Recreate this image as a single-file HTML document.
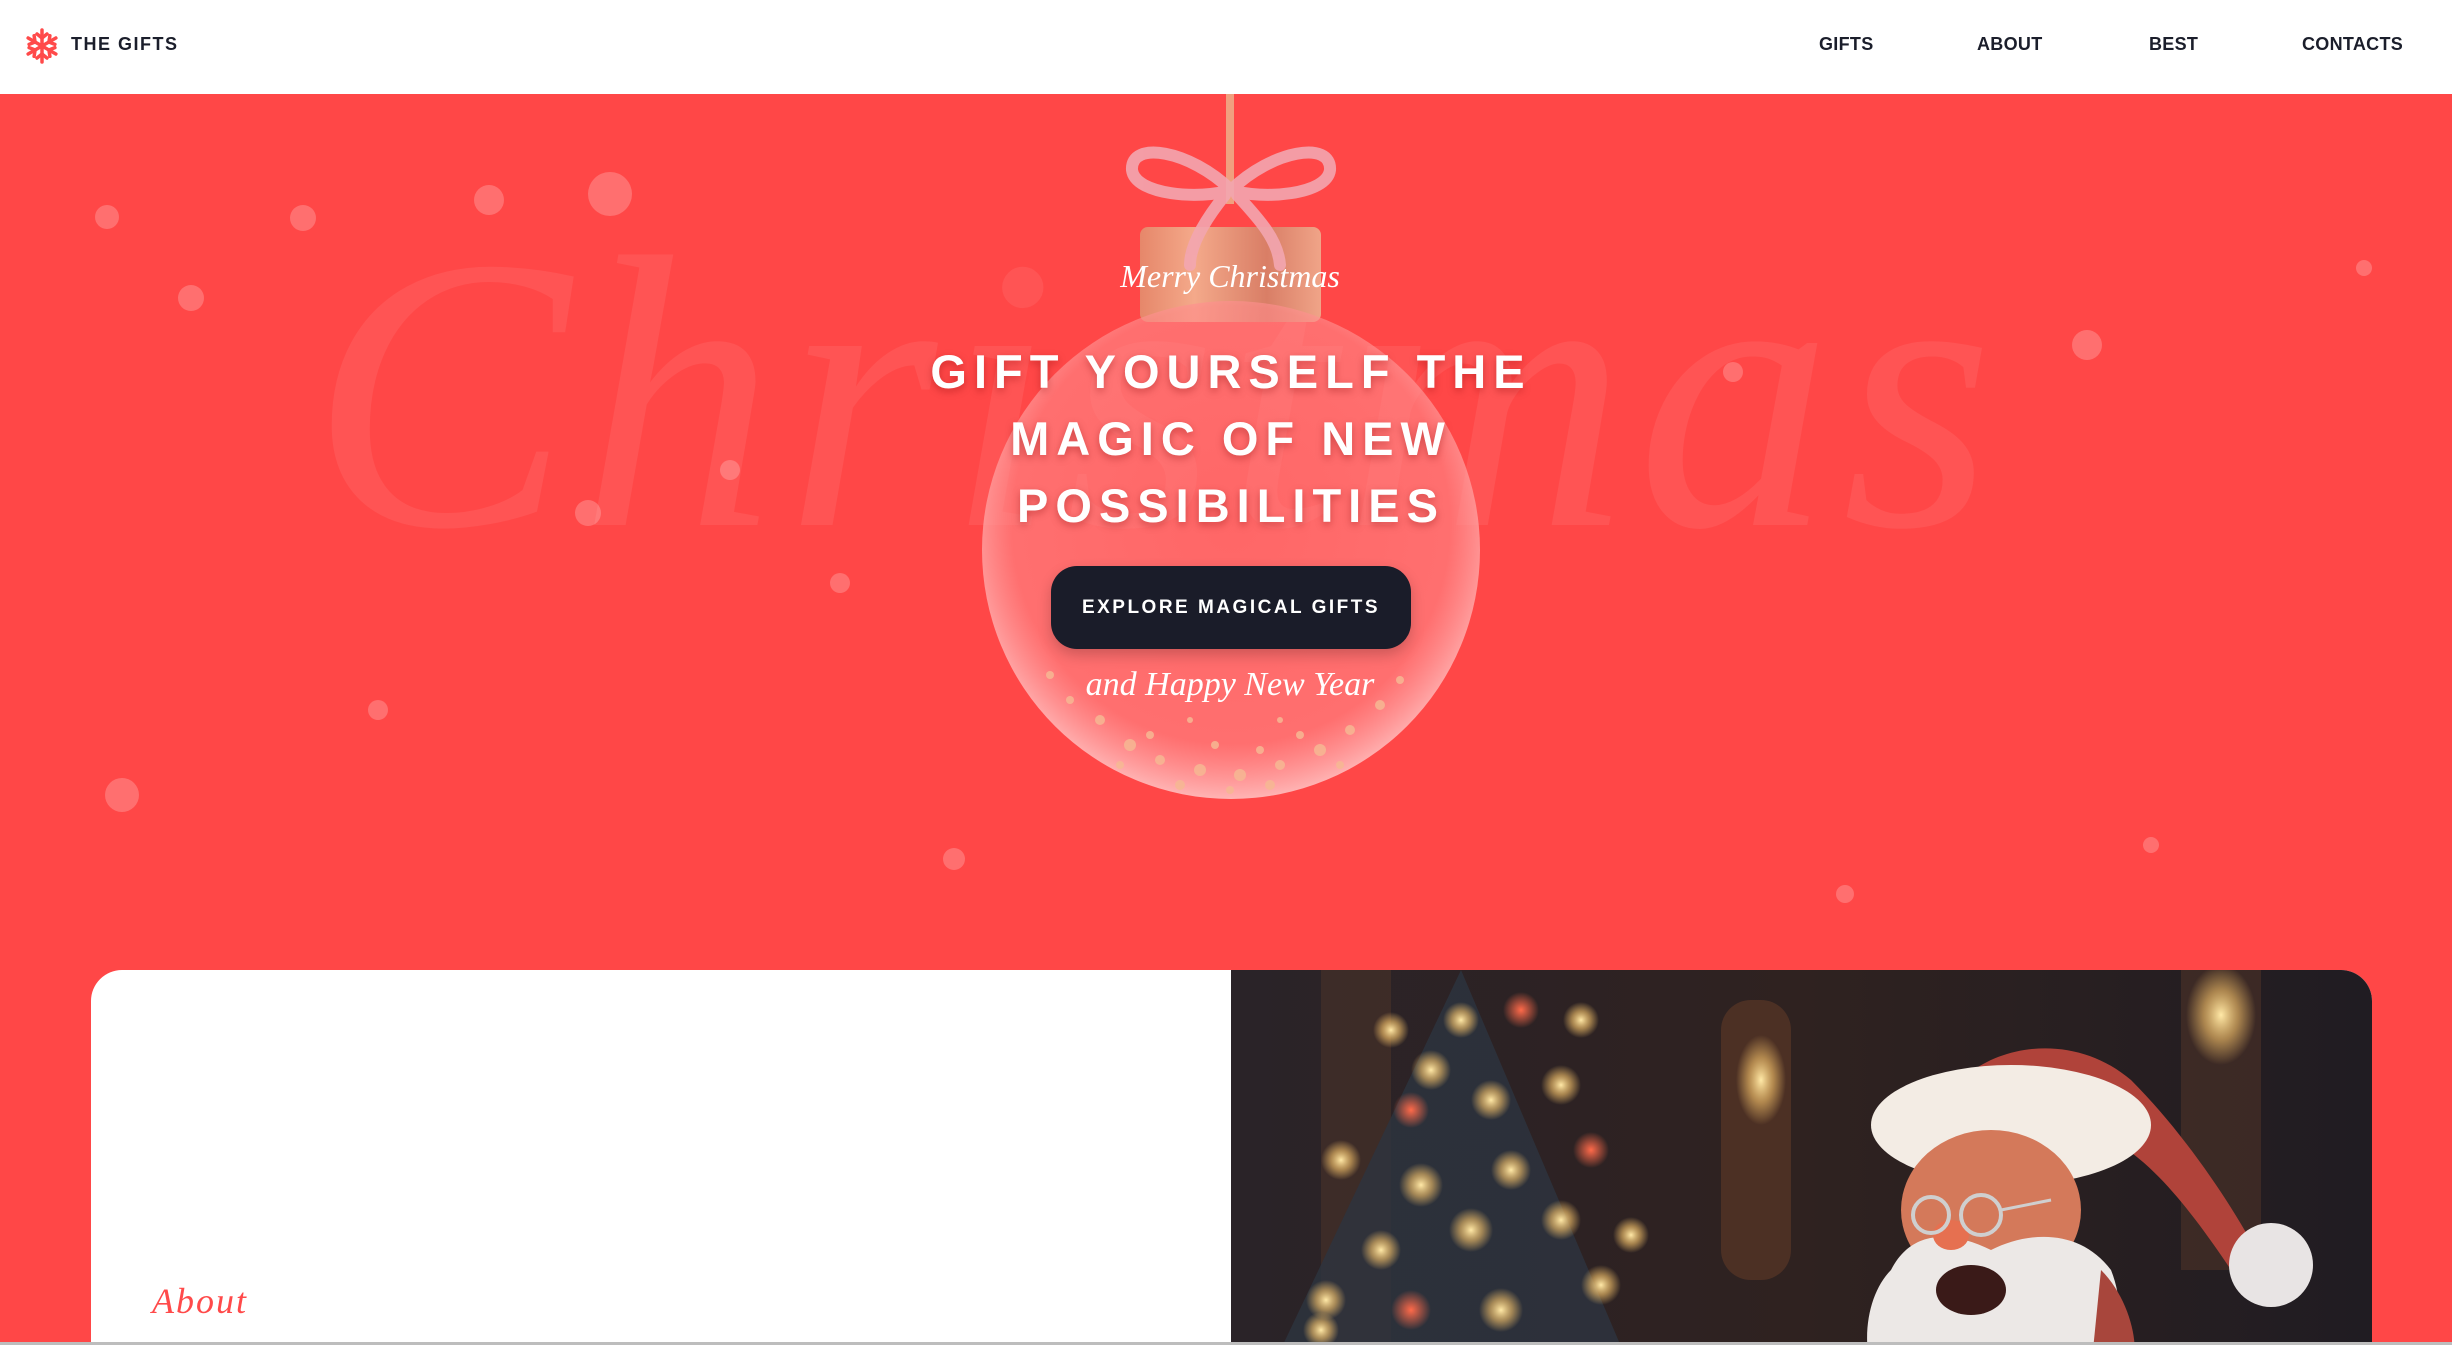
<!DOCTYPE html>
<html style="width:2452px;height:1345px;overflow:hidden"><head><meta charset="utf-8">
<style>
*{margin:0;padding:0;box-sizing:border-box}
body{width:2452px;height:1345px;overflow:hidden;background:#ff4747;font-family:"Liberation Sans",sans-serif;position:relative}
.hdr{position:absolute;left:0;top:0;width:2452px;height:94px;background:#fff}
.nav{position:absolute;top:34px;font-size:18px;font-weight:bold;color:#1b1e2b;letter-spacing:0.3px}
.abs{position:absolute}
.script{font-family:"Liberation Serif",serif;font-style:italic;color:#fff}
.title{position:absolute;left:826px;width:810px;top:338px;text-align:center;color:#fff;font-weight:bold;font-size:47px;letter-spacing:7px;line-height:67px;text-shadow:0 3px 8px rgba(120,0,0,.35)}
.btn{position:absolute;left:1051px;top:566px;width:360px;height:83px;border-radius:26px;background:#1a1c29;color:#fff;font-weight:bold;font-size:19px;letter-spacing:2.5px;text-align:center;line-height:83px;box-shadow:0 6px 14px rgba(0,0,0,.2)}
.dot{position:absolute;border-radius:50%;background:rgba(255,255,255,.22)}
</style></head><body>
<div class="hdr">
<svg class="abs" style="left:24px;top:28px" width="36" height="36" viewBox="-18 -18 36 36">
<g stroke="#ff4a4a" stroke-width="3.5" stroke-linecap="round" fill="none">
<g id="a"><line x1="0" y1="-16" x2="0" y2="16"/><path d="M-5 -12 L0 -8 L5 -12 M-5 12 L0 8 L5 12"/></g>
<use href="#a" transform="rotate(60)"/><use href="#a" transform="rotate(120)"/>
</g></svg>
<div class="abs" style="left:71px;top:34px;font-size:18px;font-weight:bold;color:#1b1e2b;letter-spacing:1.5px">THE GIFTS</div>
<div class="nav" style="left:1819px">GIFTS</div>
<div class="nav" style="left:1977px">ABOUT</div>
<div class="nav" style="left:2149px">BEST</div>
<div class="nav" style="left:2302px">CONTACTS</div>
</div>

<div class="abs script" style="left:310px;top:170px;font-size:390px;color:rgba(255,255,255,.07);letter-spacing:10px;white-space:nowrap">Christmas</div>

<div class="dot" style="left:95px;top:205px;width:24px;height:24px"></div>
<div class="dot" style="left:290px;top:205px;width:26px;height:26px"></div>
<div class="dot" style="left:474px;top:185px;width:30px;height:30px"></div>
<div class="dot" style="left:588px;top:172px;width:44px;height:44px"></div>
<div class="dot" style="left:178px;top:285px;width:26px;height:26px"></div>
<div class="dot" style="left:2072px;top:330px;width:30px;height:30px"></div>
<div class="dot" style="left:1723px;top:362px;width:20px;height:20px"></div>
<div class="dot" style="left:2356px;top:260px;width:16px;height:16px"></div>
<div class="dot" style="left:105px;top:778px;width:34px;height:34px"></div>
<div class="dot" style="left:368px;top:700px;width:20px;height:20px"></div>
<div class="dot" style="left:943px;top:848px;width:22px;height:22px"></div>
<div class="dot" style="left:1836px;top:885px;width:18px;height:18px"></div>
<div class="dot" style="left:2143px;top:837px;width:16px;height:16px"></div>
<div class="dot" style="left:830px;top:573px;width:20px;height:20px"></div>
<div class="dot" style="left:575px;top:500px;width:26px;height:26px"></div>
<div class="dot" style="left:720px;top:460px;width:20px;height:20px"></div>

<svg class="abs" style="left:960px;top:94px" width="540" height="720" viewBox="960 94 540 720">
<defs>
<radialGradient id="g" cx="50%" cy="45%" r="55%"><stop offset="0" stop-color="#ff8080" stop-opacity=".55"/><stop offset=".8" stop-color="#ff8a8a" stop-opacity=".6"/><stop offset="1" stop-color="#ffc0c0" stop-opacity=".9"/></radialGradient>
<linearGradient id="c" x1="0" x2="1"><stop offset="0" stop-color="#e6876a"/><stop offset=".3" stop-color="#f4a98a"/><stop offset=".7" stop-color="#d97e66"/><stop offset="1" stop-color="#f0a488"/></linearGradient>
</defs>
<rect x="1226" y="94" width="8" height="110" fill="#f0a07f"/>
<rect x="1140" y="227" width="181" height="95" rx="8" fill="url(#c)"/>
<circle cx="1231" cy="550" r="249" fill="url(#g)"/>
<g fill="#f6b893" opacity=".85">
<circle cx="1100" cy="720" r="5"/><circle cx="1130" cy="745" r="6"/><circle cx="1160" cy="760" r="5"/><circle cx="1200" cy="770" r="6"/><circle cx="1240" cy="775" r="6"/><circle cx="1280" cy="765" r="5"/><circle cx="1320" cy="750" r="6"/><circle cx="1350" cy="730" r="5"/><circle cx="1380" cy="705" r="5"/><circle cx="1070" cy="700" r="4"/><circle cx="1150" cy="735" r="4"/><circle cx="1215" cy="745" r="4"/><circle cx="1260" cy="750" r="4"/><circle cx="1300" cy="735" r="4"/><circle cx="1180" cy="785" r="5"/><circle cx="1230" cy="790" r="4"/><circle cx="1270" cy="785" r="5"/><circle cx="1120" cy="765" r="4"/><circle cx="1340" cy="765" r="4"/><circle cx="1400" cy="680" r="4"/><circle cx="1050" cy="675" r="4"/><circle cx="1190" cy="720" r="3"/><circle cx="1280" cy="720" r="3"/>
</g>
<g fill="none" stroke="#f3a6b0" stroke-width="12" stroke-linecap="round" opacity=".9">
<path d="M1231 190 C1190 150 1130 140 1132 170 C1135 195 1200 200 1231 190 C1262 200 1327 195 1330 170 C1332 140 1272 150 1231 190"/>
<path d="M1225 195 C1205 220 1190 245 1190 265 M1237 195 C1260 220 1278 240 1280 265"/>
</g>
</svg>

<div class="abs script" style="left:1080px;top:258px;width:300px;text-align:center;font-size:32px">Merry Christmas</div>
<div class="title">GIFT YOURSELF THE<br>MAGIC OF NEW<br>POSSIBILITIES</div>
<div class="btn">EXPLORE MAGICAL GIFTS</div>
<div class="abs script" style="left:1030px;top:666px;width:400px;text-align:center;font-size:34px">and Happy New Year</div>

<div class="abs" style="left:91px;top:970px;width:2281px;height:375px;border-radius:31px 31px 0 0;overflow:hidden;background:#fff">
<div class="abs script" style="left:61px;top:310px;font-size:36px;color:#ff4a4a;letter-spacing:2px">About</div>
<svg class="abs" style="left:1140px;top:0" width="1141" height="400" viewBox="0 0 1141 400">
<defs>
<radialGradient id="b"><stop offset="0" stop-color="#ffe9a8"/><stop offset=".5" stop-color="#f5c26a" stop-opacity=".6"/><stop offset="1" stop-color="#f5c26a" stop-opacity="0"/></radialGradient>
<radialGradient id="r"><stop offset="0" stop-color="#ff6a4a"/><stop offset="1" stop-color="#ff6a4a" stop-opacity="0"/></radialGradient>
<linearGradient id="bg" x1="0" x2="1"><stop offset="0" stop-color="#2a2328"/><stop offset=".5" stop-color="#2f2220"/><stop offset="1" stop-color="#201c22"/></linearGradient>
</defs>
<rect width="1141" height="400" fill="url(#bg)"/>
<rect x="90" y="0" width="70" height="400" fill="#5a3a2a" opacity=".4"/>
<rect x="490" y="30" width="70" height="280" rx="30" fill="#6a3e28" opacity=".5"/>
<ellipse cx="530" cy="110" rx="25" ry="45" fill="url(#b)"/>
<rect x="950" y="0" width="80" height="300" fill="#5a3a2a" opacity=".45"/>
<ellipse cx="990" cy="45" rx="35" ry="50" fill="url(#b)"/>
<path d="M230 0 L400 400 L40 400 Z" fill="#2d3440" opacity=".8"/>
<g>
<circle cx="160" cy="60" r="18" fill="url(#b)"/><circle cx="230" cy="50" r="18" fill="url(#b)"/><circle cx="290" cy="40" r="18" fill="url(#r)"/><circle cx="200" cy="100" r="20" fill="url(#b)"/><circle cx="350" cy="50" r="18" fill="url(#b)"/><circle cx="330" cy="115" r="20" fill="url(#b)"/><circle cx="260" cy="130" r="20" fill="url(#b)"/><circle cx="180" cy="140" r="18" fill="url(#r)"/><circle cx="110" cy="190" r="20" fill="url(#b)"/><circle cx="190" cy="215" r="22" fill="url(#b)"/><circle cx="280" cy="200" r="20" fill="url(#b)"/><circle cx="360" cy="180" r="18" fill="url(#r)"/><circle cx="150" cy="280" r="20" fill="url(#b)"/><circle cx="240" cy="260" r="22" fill="url(#b)"/><circle cx="330" cy="250" r="20" fill="url(#b)"/><circle cx="400" cy="265" r="18" fill="url(#b)"/><circle cx="95" cy="330" r="20" fill="url(#b)"/><circle cx="180" cy="340" r="20" fill="url(#r)"/><circle cx="270" cy="340" r="22" fill="url(#b)"/><circle cx="370" cy="315" r="20" fill="url(#b)"/><circle cx="90" cy="360" r="18" fill="url(#b)"/>
</g>
<path d="M700 160 C720 80 830 50 900 110 C960 170 1010 250 1030 290 L1000 300 C960 240 920 190 880 170 Z" fill="#b0433a"/>
<circle cx="1040" cy="295" r="42" fill="#e8e4e4"/>
<ellipse cx="780" cy="155" rx="140" ry="60" fill="#f3ece4"/>
<ellipse cx="760" cy="240" rx="90" ry="80" fill="#d4795a"/>
<path d="M660 300 C680 260 720 260 760 280 C800 260 850 260 880 300 C900 350 880 400 860 400 L640 400 C630 360 640 320 660 300 Z" fill="#ece8e6"/>
<ellipse cx="740" cy="320" rx="35" ry="25" fill="#3a1a18"/>
<ellipse cx="720" cy="265" rx="18" ry="15" fill="#e67050"/>
<circle cx="700" cy="245" r="18" fill="none" stroke="#cfcfcf" stroke-width="4"/>
<circle cx="750" cy="245" r="20" fill="none" stroke="#cfcfcf" stroke-width="4"/>
<path d="M770 240 L820 230" stroke="#cfcfcf" stroke-width="3"/>
<path d="M870 300 C900 330 910 380 900 400 L860 400 Z" fill="#a8463c"/>
</svg>
</div>
<div class="abs" style="left:0;top:1342px;width:2452px;height:3px;background:#bdbdbd"></div>
</body></html>
